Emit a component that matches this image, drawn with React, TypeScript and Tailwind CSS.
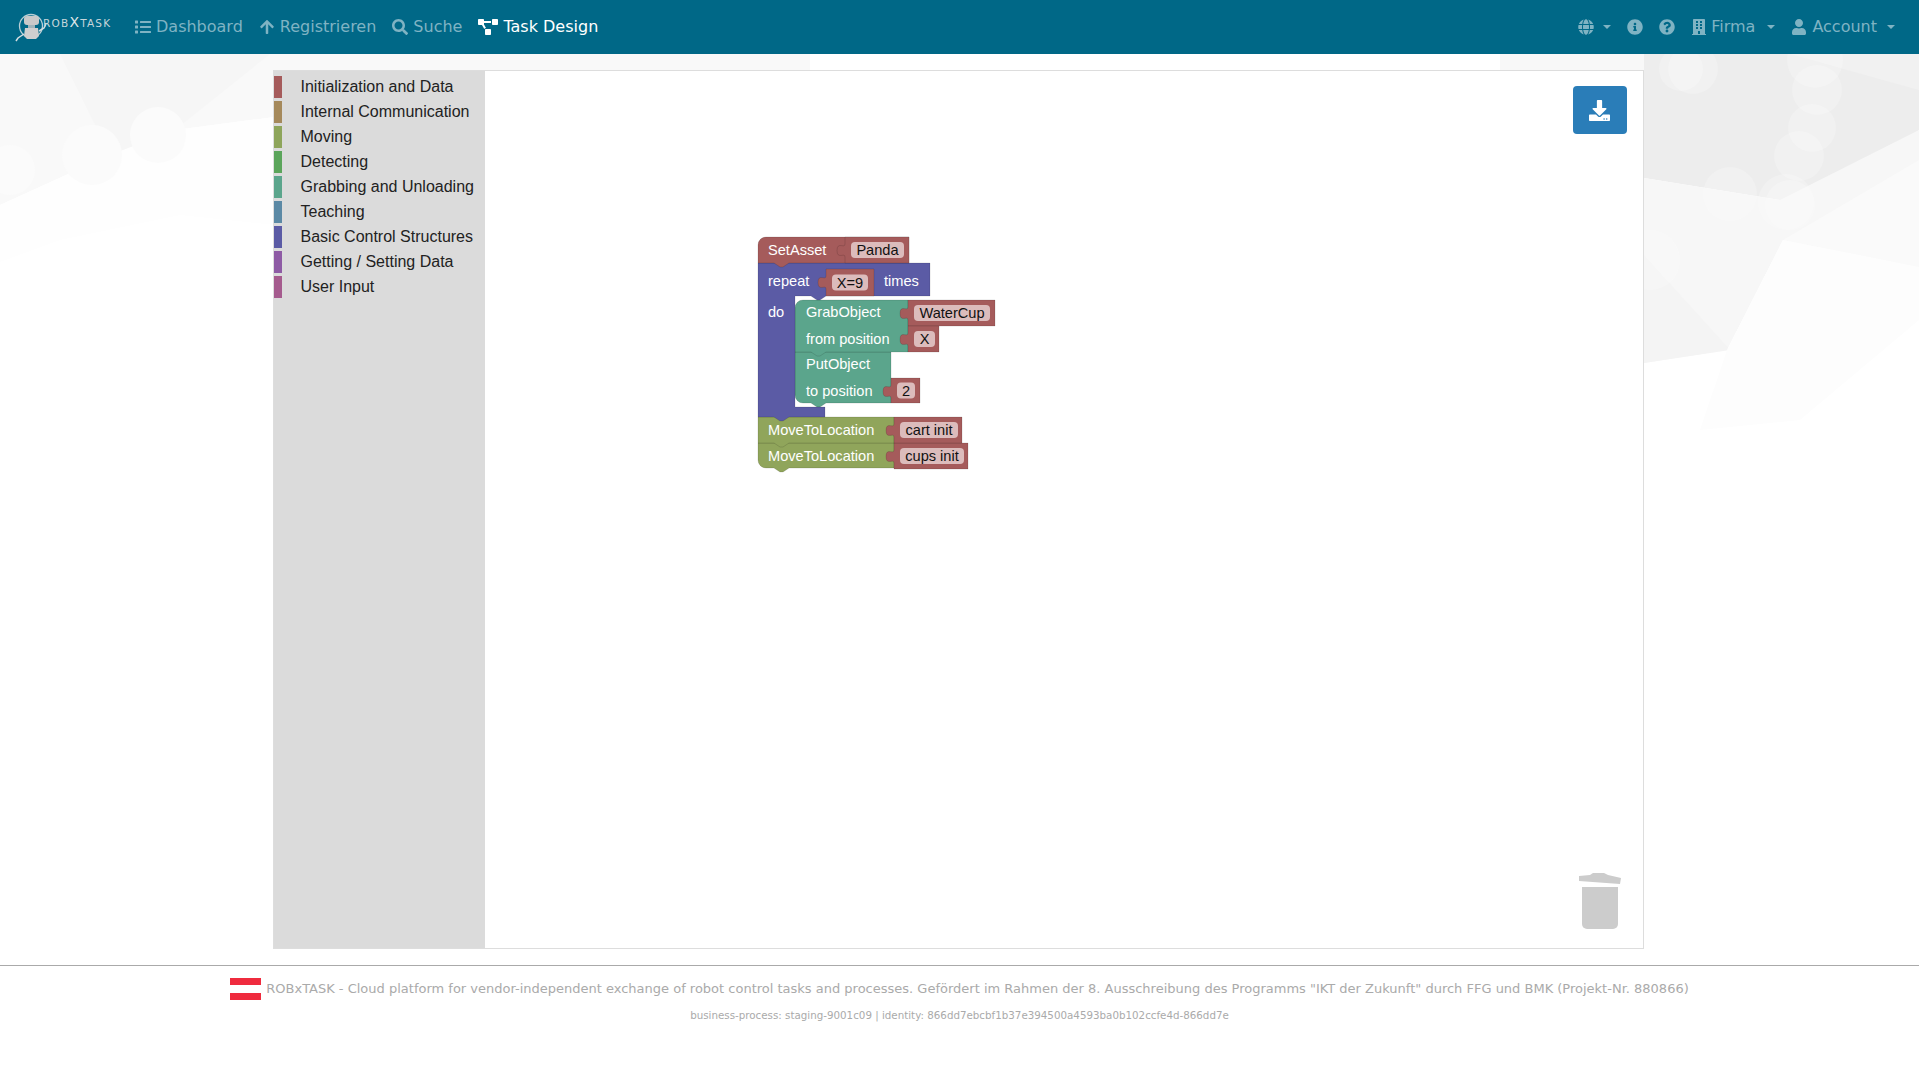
import { ReactNode } from 'react'
import {
  FaList,
  FaArrowUp,
  FaSearch,
  FaProjectDiagram,
  FaGlobe,
  FaInfoCircle,
  FaQuestionCircle,
  FaBuilding,
  FaUser,
  FaDownload,
} from 'react-icons/fa'

const CATEGORIES = [
  { name: 'Initialization and Data', color: 'bg-[#a55b5b]' },
  { name: 'Internal Communication', color: 'bg-[#a5895b]' },
  { name: 'Moving', color: 'bg-[#8ea55b]' },
  { name: 'Detecting', color: 'bg-[#5ba55b]' },
  { name: 'Grabbing and Unloading', color: 'bg-[#5ba58c]' },
  { name: 'Teaching', color: 'bg-[#5b89a5]' },
  { name: 'Basic Control Structures', color: 'bg-[#5b5ba5]' },
  { name: 'Getting / Setting Data', color: 'bg-[#8e5ba5]' },
  { name: 'User Input', color: 'bg-[#a55b8e]' },
]

const RED = '#a55b5b'
const PURPLE = '#5b5ba5'
const TEAL = '#5ba58c'
const OLIVE = '#90a55b'

function Caret({ className }: { className: string }) {
  return <span className={`inline-block border-x-[4.5px] border-t-[4.5px] border-x-transparent border-t-current ${className}`} />
}

function NavLink({ icon, label, active }: { icon: ReactNode; label: string; active?: boolean }) {
  return (
    <a className={`flex items-center gap-[5px] px-2 ${active ? 'text-white' : 'text-[#7fb3c3]'}`}>
      {icon}
      {label}
    </a>
  )
}

function Logo() {
  return (
    <svg width="110" height="40" viewBox="0 0 110 40" className="mr-[5px] shrink-0">
      <circle cx="19" cy="19" r="11.5" fill="none" stroke="#b9cfd6" strokeWidth="1.3" />
      <rect x="12" y="9" width="15" height="9" rx="3" fill="#c9c9c9" />
      <rect x="16" y="18" width="7" height="3" fill="#9fb4bb" />
      <path d="M13 21h13l1 8-3 3h-9l-3-3z" fill="#cfcfcf" />
      <path d="M12 27l-6 4-2 3M27 24l5-3 2-4" fill="none" stroke="#d5dfe2" strokeWidth="1.5" />
      <text x="31" y="20" fontSize="10.5" letterSpacing="1.2" fill="#c7d6db" fontFamily="'DejaVu Sans', sans-serif">
        ROB
        <tspan fontSize="14" fill="#dfe6e8">X</tspan>
        TASK
      </text>
    </svg>
  )
}

function Backdrop() {
  return (
    <svg className="absolute inset-0 h-full w-full" viewBox="0 54 1919 911" preserveAspectRatio="none">
      <polygon points="0,54 810,54 810,70 274,70 274,117 175,130 110,155 0,205" fill="#f9f9f9" />
      <polygon points="0,205 110,155 175,130 274,117 274,225 180,215 60,240 0,262" fill="#fefefe" />
      <polygon points="60,54 270,54 175,130 110,155" fill="#f6f6f6" />
      <circle cx="92" cy="155" r="30" fill="#fbfbfb" />
      <circle cx="10" cy="170" r="25" fill="#fbfbfb" />
      <circle cx="158" cy="135" r="28" fill="#fbfbfb" />
      <polygon points="1500,54 1644,54 1644,70 1500,70" fill="#f8f8f8" />
      <polygon points="1644,54 1919,54 1919,130 1783,240 1780,200 1644,178" fill="#ededed" />
      <polygon points="1850,54 1919,54 1919,90 1790,54" fill="#f1f1f1" />
      <polygon points="1644,178 1780,200 1919,130 1919,267 1783,240 1727,350 1644,363" fill="#f7f7f7" />
      <polygon points="1783,240 1919,160 1919,267" fill="#fafafa" />
      <polygon points="1644,255 1730,350 1644,363" fill="#f4f4f4" />
      <polygon points="1727,350 1783,240 1919,267 1919,320 1800,420 1700,430" fill="#fdfdfd" />
      <g fill="#ffffff" fillOpacity="0.22">
        <circle cx="1693" cy="69" r="25" />
        <circle cx="1681" cy="69" r="22" />
        <circle cx="1815" cy="60" r="28" />
        <circle cx="1817" cy="90" r="25" />
        <circle cx="1812" cy="128" r="24" />
        <circle cx="1799" cy="156" r="25" />
        <circle cx="1730" cy="194" r="27" />
        <circle cx="1786" cy="202" r="28" />
        <circle cx="1790" cy="205" r="25" />
        <circle cx="1650" cy="260" r="30" />
      </g>
    </svg>
  )
}

const EDGE = { stroke: '#000', strokeOpacity: 0.12 }

function Label({ x, y, children }: { x: number; y: number; children: string }) {
  return (
    <text x={x} y={y} fontSize="14.6" fill="#fff" fontFamily="'Liberation Sans', sans-serif">
      {children}
    </text>
  )
}

// value block with the puzzle tab on its left edge, and a light field inside
function Value({ x, y, w, h = 26, fw, text }: { x: number; y: number; w: number; h?: number; fw: number; text: string }) {
  const fy = y + (h - 16) / 2
  return (
    <g>
      <path
        d={`M${x} ${y}H${x + w}V${y + h}H${x}V${y + 20}c0 -5 -8 3 -8 -6.5s8 -1.5 8 -6.5Z`}
        fill={RED}
        {...EDGE}
      />
      <rect x={x + 6} y={fy} width={fw} height="16" rx="4" fill="#dcbcbc" />
      <text x={x + 6 + fw / 2} y={fy + 13} textAnchor="middle" fontSize="14.6" fill="#111" fontFamily="'Liberation Sans', sans-serif">
        {text}
      </text>
    </g>
  )
}

// drawn bottom-up, so that each block's notch lies over the block below it
function Blocks() {
  return (
    <svg className="absolute inset-0 h-full w-full" viewBox="485 71 1158 877">
      <path d="M758 443H894V468H789l-6 4h-3l-6 -4H766a8 8 0 0 1 -8 -8Z" fill={OLIVE} {...EDGE} />
      <Label x={768} y={461}>MoveToLocation</Label>
      <Value x={894} y={443} w={74} fw={64} text="cups init" />

      <path d="M758 417H894V443H789l-6 4h-3l-6 -4H758Z" fill={OLIVE} {...EDGE} />
      <Label x={768} y={435}>MoveToLocation</Label>
      <Value x={894} y={417} w={68} fw={58} text="cart init" />

      <path d="M795 352H891V403H826l-6 4h-3l-6 -4H803a8 8 0 0 1 -8 -8Z" fill={TEAL} {...EDGE} />
      <Label x={806} y={369}>PutObject</Label>
      <Label x={806} y={396}>to position</Label>
      <Value x={891} y={378} w={29} h={25} fw={18} text="2" />

      <path d="M795 308a8 8 0 0 1 8 -8H908V352H826l-6 4h-3l-6 -4H795Z" fill={TEAL} {...EDGE} />
      <Label x={806} y={317}>GrabObject</Label>
      <Label x={806} y={344}>from position</Label>
      <Value x={908} y={300} w={87} fw={76} text="WaterCup" />
      <Value x={908} y={326} w={31} fw={21} text="X" />

      <path
        d="M758 263H930V296H826l-6 4h-3l-6 -4H795V407H825V417H789l-6 4h-3l-6 -4H758Z"
        fill={PURPLE}
        {...EDGE}
      />
      <Label x={768} y={286}>repeat</Label>
      <Label x={884} y={286}>times</Label>
      <Label x={768} y={317}>do</Label>
      <Value x={826} y={269} w={48} h={27} fw={36} text="X=9" />

      <path d="M758 245a8 8 0 0 1 8 -8H909V263H789l-6 4h-3l-6 -4H758Z" fill={RED} {...EDGE} />
      <Label x={768} y={255}>SetAsset</Label>
      <Value x={845} y={237} w={64} fw={53} text="Panda" />
    </svg>
  )
}

function Trash() {
  return (
    <svg width="46" height="58" viewBox="0 0 46 58" className="absolute bottom-[18px] right-[20px]" fill="#cccccc">
      <path d="M2 4l11-1 3-2h11l4 2 13 3-1 6L2 9z" />
      <path d="M5 15h36v37a5 5 0 0 1-5 5H10a5 5 0 0 1-5-5z" />
    </svg>
  )
}

export default function App() {
  return (
    <div className="flex min-h-[1069px] flex-col bg-white font-['DejaVu_Sans',sans-serif]">
      <nav className="flex h-[54px] shrink-0 items-center bg-[#006887] pl-[12px] pr-[16px] text-[16px]">
        <Logo />
        <NavLink icon={<FaList size={16} />} label="Dashboard" />
        <NavLink icon={<FaArrowUp size={16} />} label="Registrieren" />
        <NavLink icon={<FaSearch size={16} />} label="Suche" />
        <NavLink icon={<FaProjectDiagram size={20} />} label="Task Design" active />
        <div className="ml-auto flex items-center text-[#7fb3c3]">
          <a className="flex items-center px-2">
            <FaGlobe size={16} />
            <Caret className="ml-[9px]" />
          </a>
          <a className="px-2">
            <FaInfoCircle size={16} />
          </a>
          <a className="px-2">
            <FaQuestionCircle size={16} />
          </a>
          <a className="flex items-center gap-[4px] px-2">
            <FaBuilding size={16} />
            Firma
            <Caret className="ml-[8px]" />
          </a>
          <a className="flex items-center gap-[5px] px-2">
            <FaUser size={16} />
            Account
            <Caret className="ml-[5px]" />
          </a>
        </div>
      </nav>

      <main className="relative flex h-[911px] shrink-0 justify-center py-4">
        <Backdrop />
        <section className="relative ml-[-3px] flex w-[1371px] border border-[#dddddd] bg-white">
          <aside className="w-[211px] shrink-0 bg-[#dbdbdb] pt-[3px] font-['Liberation_Sans',sans-serif] text-[16px] text-[#222222]">
            {CATEGORIES.map((c) => (
              <div key={c.name} className="flex h-[25px] items-center">
                <span className={`h-[22px] w-[8px] ${c.color}`} />
                <span className="ml-[19px] whitespace-nowrap">{c.name}</span>
              </div>
            ))}
          </aside>
          <div className="relative flex-1">
            <Blocks />
            <button className="absolute right-[16px] top-[15px] flex h-[48px] w-[54px] items-center justify-center rounded-[4px] bg-[#2a7db8] text-white">
              <FaDownload size={21} />
            </button>
            <Trash />
          </div>
        </section>
      </main>

      <footer className="flex-1 border-t border-[#aaaaaa] text-center text-[#aaaaaa]">
        <div className="mt-[12px] flex items-center justify-center text-[13px]">
          <span className="mr-[5px] flex h-[22px] w-[31px] flex-col justify-between">
            <span className="h-[7px] bg-[#ef2b3e]" />
            <span className="h-[7px] bg-[#ef2b3e]" />
          </span>
          ROBxTASK - Cloud platform for vendor-independent exchange of robot control tasks and processes. Gefördert im Rahmen der 8. Ausschreibung des Programms "IKT der Zukunft" durch FFG und BMK (Projekt-Nr. 880866)
        </div>
        <div className="mt-[8px] text-[10.3px]">business-process: staging-9001c09 | identity: 866dd7ebcbf1b37e394500a4593ba0b102ccfe4d-866dd7e</div>
      </footer>
    </div>
  )
}
